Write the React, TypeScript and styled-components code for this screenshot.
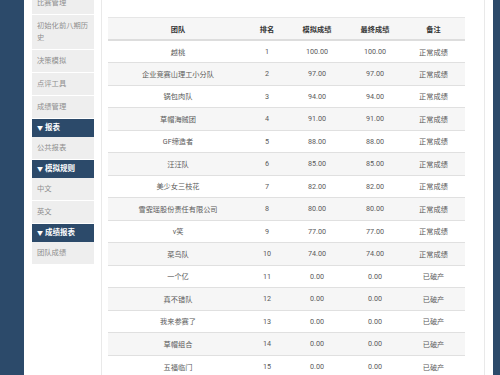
import React from 'react';
import styled, { createGlobalStyle } from 'styled-components';

const GlobalStyle = createGlobalStyle`
  html, body {
    margin: 0;
    padding: 0;
    background: #ffffff;
    overflow: hidden;
  }
  body {
    font-family: Roboto, "Noto Sans CJK SC", sans-serif;
  }
`;

type NavEntry = { kind: 'item' | 'header'; label: string };

const nav: NavEntry[] = [
  { kind: 'item', label: '比赛管理' },
  { kind: 'item', label: '初始化前八期历史' },
  { kind: 'item', label: '决策模拟' },
  { kind: 'item', label: '点评工具' },
  { kind: 'item', label: '成绩管理' },
  { kind: 'header', label: '报表' },
  { kind: 'item', label: '公共报表' },
  { kind: 'header', label: '模拟规则' },
  { kind: 'item', label: '中文' },
  { kind: 'item', label: '英文' },
  { kind: 'header', label: '成绩报表' },
  { kind: 'item', label: '团队成绩' }
];

type Row = [team: string, sim: string, final: string, note: string];

const rows: Row[] = [
  ['越桃', '100.00', '100.00', '正常成绩'],
  ['企业竞赛山理工小分队', '97.00', '97.00', '正常成绩'],
  ['锅包肉队', '94.00', '94.00', '正常成绩'],
  ['草帽海贼团', '91.00', '91.00', '正常成绩'],
  ['GF缔造者', '88.00', '88.00', '正常成绩'],
  ['汪汪队', '85.00', '85.00', '正常成绩'],
  ['美少女三枝花', '82.00', '82.00', '正常成绩'],
  ['雪霏瑶股份责任有限公司', '80.00', '80.00', '正常成绩'],
  ['v笑', '77.00', '77.00', '正常成绩'],
  ['菜鸟队', '74.00', '74.00', '正常成绩'],
  ['一个亿', '0.00', '0.00', '已破产'],
  ['真不错队', '0.00', '0.00', '已破产'],
  ['我来参赛了', '0.00', '0.00', '已破产'],
  ['草帽组合', '0.00', '0.00', '已破产'],
  ['五福临门', '0.00', '0.00', '已破产']
];

const Page = styled.div`
  display: flex;
  height: 375px;
`;

const EdgeBar = styled.div<{ $width: number }>`
  flex: 0 0 ${p => p.$width}px;
  background: #2c4a6a;
`;

const Sidebar = styled.nav`
  flex: 0 0 62px;
  margin: -8px 7px 0 8px;
  display: flex;
  flex-direction: column;
  align-self: flex-start;
`;

const NavItem = styled.div`
  background: #eeeeee;
  color: #8e8e8e;
  font-size: 7.3px;
  line-height: 12px;
  padding: 5px 2px 5px 5px;
  border-bottom: 1px solid #ffffff;
`;

const NavHeader = styled.div`
  background: #2c4a6a;
  color: #ffffff;
  font-weight: bold;
  font-size: 7.5px;
  line-height: 12px;
  padding: 3px 5px;

  &::before {
    content: '▼';
    font-size: 6px;
    margin-right: 2px;
  }
`;

const Panel = styled.main`
  flex: 0 0 370px;
  border-left: 1px solid #e9e9e9;
  border-right: 1px solid #e9e9e9;
  padding: 17px 6px 0 6px;
  margin-right: 8px;
  background: #ffffff;
  overflow: hidden;
`;

const Table = styled.table`
  width: 357px;
  table-layout: fixed;
  border-collapse: collapse;
  font-size: 7.2px;
  color: #5a5a5a;
  text-align: center;
`;

const HeadCell = styled.th<{ $width: number }>`
  width: ${p => p.$width}px;
  height: 21px;
  padding: 0;
  font-weight: bold;
  color: #333333;
  background: #f6f6f6;
  border-top: 1px solid #e6e6e6;
  border-bottom: 2px solid #dddddd;
`;

const BodyRow = styled.tr<{ $striped: boolean }>`
  height: 22.5px;
  background: ${p => (p.$striped ? '#f6f6f6' : '#ffffff')};
`;

const Cell = styled.td`
  padding: 0;
  border-top: 1px solid #e0e0e0;
  vertical-align: middle;
  white-space: nowrap;
`;

const columns: [string, number][] = [
  ['团队', 140],
  ['排名', 38],
  ['模拟成绩', 62],
  ['最终成绩', 54],
  ['备注', 63]
];

export default function App() {
  return (
    <>
      <GlobalStyle />
      <Page>
        <EdgeBar $width={24} />
        <Sidebar>
          {nav.map(n =>
            n.kind === 'header' ? (
              <NavHeader key={n.label}>{n.label}</NavHeader>
            ) : (
              <NavItem key={n.label}>{n.label}</NavItem>
            )
          )}
        </Sidebar>
        <Panel>
          <Table>
            <thead>
              <tr>
                {columns.map(([label, w]) => (
                  <HeadCell key={label} $width={w}>
                    {label}
                  </HeadCell>
                ))}
              </tr>
            </thead>
            <tbody>
              {rows.map((r, i) => (
                <BodyRow key={r[0]} $striped={i % 2 === 1}>
                  <Cell>{r[0]}</Cell>
                  <Cell>{i + 1}</Cell>
                  <Cell>{r[1]}</Cell>
                  <Cell>{r[2]}</Cell>
                  <Cell>{r[3]}</Cell>
                </BodyRow>
              ))}
            </tbody>
          </Table>
        </Panel>
        <EdgeBar $width={19} />
      </Page>
    </>
  );
}
